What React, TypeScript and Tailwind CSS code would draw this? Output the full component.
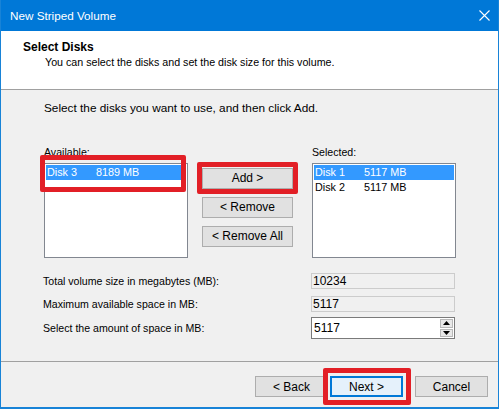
import React from 'react';

const font = { fontFamily: '"Liberation Sans", Arial, sans-serif' };

const Button = ({ label, primary = false, className = '' }: { label: string; primary?: boolean; className?: string }) => (
    <div
        className={`h-[21px] flex items-center justify-center text-[12px] text-black ${
            primary ? 'border-2 border-[#0078d7] bg-[#e5f1fb]' : 'border border-[#adadad] bg-[#e1e1e1]'
        } ${className}`}
    >
        {label}
    </div>
);

const ListBox = ({ rows }: { rows: { disk: string; size: string; selected?: boolean }[] }) => (
    <div className="w-[144px] h-[95px] mt-[3px] border border-[#828790] bg-white p-px">
        {rows.map((r) => (
            <div
                key={r.disk}
                className={`h-[15px] flex items-center pl-[1px] text-[10.8px] leading-[15px] ${
                    r.selected ? 'bg-[#3399ff] text-white' : 'text-black'
                }`}
            >
                <span className="w-[49px]">{r.disk}</span>
                <span>{r.size}</span>
            </div>
        ))}
    </div>
);

const ReadOnlyField = ({ value }: { value: string }) => (
    <div className="w-[144px] h-[16px] border border-[#cccccc] bg-[#f0f0f0] pl-[1px] flex items-center text-[12px] text-black">
        {value}
    </div>
);

const SpinBox = ({ value }: { value: string }) => (
    <div className="w-[144px] h-[22px] border border-[#7a7a7a] bg-white flex items-stretch">
        <div className="flex-1 flex items-center pl-[2px] text-[12px] text-black">{value}</div>
        <div className="w-[15px] flex flex-col gap-px p-px">
            <div className="flex-1 bg-[#e8e8e8] border border-[#b8b8b8] flex items-center justify-center">
                <svg width="7" height="4" viewBox="0 0 7 4">
                    <path d="M0 4 L3.5 0 L7 4 Z" fill="#000" />
                </svg>
            </div>
            <div className="flex-1 bg-[#e8e8e8] border border-[#b8b8b8] flex items-center justify-center">
                <svg width="7" height="4" viewBox="0 0 7 4">
                    <path d="M0 0 L3.5 4 L7 0 Z" fill="#000" />
                </svg>
            </div>
        </div>
    </div>
);

const Highlight = ({ className }: { className: string }) => (
    <div className={`absolute border-[5px] border-[#e21f26] rounded-[2px] pointer-events-none ${className}`} />
);

export default function App() {
    return (
        <div
            style={font}
            className="relative w-[499px] h-[409px] flex flex-col bg-[#f0f0f0] border-x border-b-2 border-[#1883d7] overflow-hidden"
        >
            {/* Title bar */}
            <div className="h-[31px] shrink-0 bg-[#0078d7] flex items-center justify-between pl-[9px] pr-[9px]">
                <span className="text-[11.7px] text-white">New Striped Volume</span>
                <svg width="11" height="11" viewBox="0 0 11 11" className="-mr-[1px]">
                    <path d="M0.5 0.5 L10.5 10.5 M10.5 0.5 L0.5 10.5" stroke="#fff" strokeWidth="1.1" />
                </svg>
            </div>

            {/* Header */}
            <div className="h-[59px] shrink-0 bg-white border-b border-[#a0a0a0] pt-[9px] leading-[15px] text-black">
                <div className="pl-[22px] font-bold text-[12px]">Select Disks</div>
                <div className="pl-[44px] text-[10.7px]">You can select the disks and set the disk size for this volume.</div>
            </div>

            {/* Body */}
            <div className="h-[271px] shrink-0 pl-[43px] pt-[11px] text-[10.6px] leading-[15px] text-black">
                <div className="text-[11.8px]">Select the disks you want to use, and then click Add.</div>

                <div className="flex mt-[29px]">
                    <div className="flex flex-col">
                        <div>Available:</div>
                        <ListBox rows={[{ disk: 'Disk 3', size: '8189 MB', selected: true }]} />
                    </div>
                    <div className="flex flex-col gap-[8px] pt-[23px] ml-[14px] w-[91px]">
                        <Button label="Add >" />
                        <Button label="< Remove" />
                        <Button label="< Remove All" />
                    </div>
                    <div className="flex flex-col ml-[19px]">
                        <div>Selected:</div>
                        <ListBox
                            rows={[
                                { disk: 'Disk 1', size: '5117 MB', selected: true },
                                { disk: 'Disk 2', size: '5117 MB' },
                            ]}
                        />
                    </div>
                </div>

                <div className="flex flex-col gap-[7px] mt-[15px]">
                    <div className="flex items-center">
                        <span className="w-[268px] -ml-px">Total volume size in megabytes (MB):</span>
                        <ReadOnlyField value="10234" />
                    </div>
                    <div className="flex items-center">
                        <span className="w-[268px] -ml-px">Maximum available space in MB:</span>
                        <ReadOnlyField value="5117" />
                    </div>
                    <div className="flex items-center -mt-[2px]">
                        <span className="w-[268px] -ml-px">Select the amount of space in MB:</span>
                        <SpinBox value="5117" />
                    </div>
                </div>
            </div>

            {/* Footer */}
            <div className="flex-1 border-t border-[#a0a0a0] flex justify-end items-start pt-[14px] pr-[10px]">
                <Button label="< Back" className="w-[73px]" />
                <Button label="Next >" primary className="w-[73px] ml-[2px]" />
                <Button label="Cancel" className="w-[73px] ml-[12px]" />
            </div>

            {/* Red annotations */}
            <Highlight className="left-[39px] top-[155px] w-[146px] h-[37px]" />
            <Highlight className="left-[196px] top-[162px] w-[101px] h-[32px]" />
            <Highlight className="left-[322px] top-[368px] w-[88px] h-[37px]" />
        </div>
    );
}
